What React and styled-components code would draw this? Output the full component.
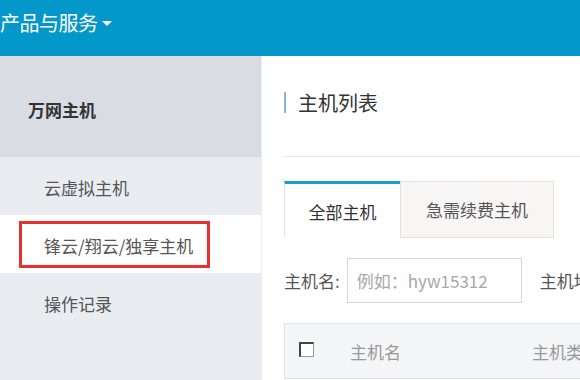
import styled, { createGlobalStyle } from "styled-components";

const GlobalStyled = createGlobalStyle`
* {
  margin: 0;
  padding: 0;
  box-sizing: border-box;
}
body {
  font-family: "Noto Sans CJK SC", "Liberation Sans", sans-serif;
  background: #ffffff;
  overflow: hidden;
}
`;

const Page = styled.div`
  display: flex;
  flex-direction: column;
  width: 580px;
  height: 380px;
  overflow: hidden;
`;

const TopBar = styled.div`
  display: flex;
  align-items: center;
  height: 56px;
  flex-shrink: 0;
  padding-bottom: 12px;
  background: #0397ca;
  color: #ffffff;
  font-size: 20px;
  letter-spacing: -0.5px;
`;

const Caret = styled.span`
  display: inline-block;
  margin-left: 4px;
  margin-top: 2px;
  border-left: 5px solid transparent;
  border-right: 5px solid transparent;
  border-top: 5px solid #ffffff;
`;

const Body = styled.div`
  display: flex;
  flex: 1;
  min-height: 0;
`;

const Sidebar = styled.aside`
  display: flex;
  flex-direction: column;
  width: 261px;
  flex-shrink: 0;
  background: #e9ecf1;
`;

const SideHeader = styled.div`
  display: flex;
  align-items: center;
  height: 101px;
  padding-left: 28px;
  padding-top: 6px;
  background: #d9dce3;
  color: #333333;
  font-size: 17px;
  font-weight: bold;
`;

const SideItem = styled.div`
  display: flex;
  align-items: center;
  height: 58px;
  padding: 0 19px;
  background: ${(p) => (p.$active ? "#ffffff" : "transparent")};
  color: #555555;
  font-size: 17px;
`;

const Highlight = styled.div`
  display: flex;
  align-items: center;
  width: 191px;
  height: 47px;
  padding-left: ${(p) => (p.$on ? "22px" : "25px")};
  padding-top: 2px;
  border: ${(p) => (p.$on ? "3px solid #e8302f" : "none")};
`;

const Main = styled.main`
  flex: 1;
  padding-left: 22px;
  border-left: 1px solid #eeeeee;
  overflow: hidden;
`;

const TitleRow = styled.div`
  display: flex;
  align-items: center;
  gap: 12px;
  height: 101px;
  padding-top: 34px;
  padding-bottom: 41px;
  border-bottom: 1px solid #e6e6e6;
`;

const TitleBar = styled.span`
  width: 2px;
  height: 21px;
  background: #8cb3dc;
`;

const Title = styled.h2`
  font-size: 20px;
  font-weight: normal;
  color: #333333;
  line-height: 26px;
`;

const TabBar = styled.div`
  display: flex;
  margin-top: 24px;
  width: 400px;
`;

const Tab = styled.div`
  display: flex;
  align-items: center;
  justify-content: center;
  height: 57px;
  width: ${(p) => p.$w}px;
  font-size: 17px;
  color: ${(p) => (p.$active ? "#333333" : "#555555")};
  background: ${(p) => (p.$active ? "#ffffff" : "#f7f6f5")};
  border: 1px solid #e2e2e2;
  border-top: ${(p) => (p.$active ? "3px solid #17a0c9" : "1px solid #e2e2e2")};
  border-right: ${(p) => (p.$active ? "none" : "1px solid #e2e2e2")};
  border-bottom: ${(p) => (p.$active ? "none" : "1px solid #e2e2e2")};
`;

const FilterRow = styled.div`
  display: flex;
  align-items: center;
  margin-top: 20px;
  white-space: nowrap;
`;

const Label = styled.span`
  font-size: 17px;
  color: #555555;
  margin-right: ${(p) => p.$gap || 0}px;
`;

const Input = styled.input`
  width: 175px;
  height: 45px;
  flex-shrink: 0;
  padding-left: 9px;
  margin-right: 18px;
  border: 1px solid #d6d6d6;
  font-family: "Noto Sans CJK SC", "Liberation Sans", sans-serif;
  font-size: 17px;
  color: #333333;
  outline: none;
  &::placeholder {
    color: #a8a8a8;
  }
`;

const TableHead = styled.div`
  display: flex;
  align-items: center;
  height: 56px;
  margin-top: 20px;
  padding-left: 14px;
  background: #f4f5f7;
  border: 1px solid #e4e4e4;
  border-right: none;
  white-space: nowrap;
`;

const Check = styled.span`
  width: 15px;
  height: 15px;
  flex-shrink: 0;
  margin-right: 36px;
  margin-bottom: 4px;
  background: #ffffff;
  border: 1px solid #999999;
  border-top: 2px solid #444444;
  border-left: 2px solid #444444;
`;

const HeadCell = styled.span`
  width: ${(p) => p.$w}px;
  flex-shrink: 0;
  font-size: 17px;
  color: #999999;
`;

const sideItems = ["云虚拟主机", "锋云/翔云/独享主机", "操作记录"];

export default function App() {
  return (
    <>
      <GlobalStyled />
      <Page>
        <TopBar>
          产品与服务
          <Caret />
        </TopBar>
        <Body>
          <Sidebar>
            <SideHeader>万网主机</SideHeader>
            {sideItems.map((item, i) => (
              <SideItem key={item} $active={i === 1}>
                <Highlight $on={i === 1}>{item}</Highlight>
              </SideItem>
            ))}
          </Sidebar>
          <Main>
            <TitleRow>
              <TitleBar />
              <Title>主机列表</Title>
            </TitleRow>
            <TabBar>
              <Tab $active $w={116}>全部主机</Tab>
              <Tab $w={154}>急需续费主机</Tab>
            </TabBar>
            <FilterRow>
              <Label $gap={7}>主机名:</Label>
              <Input placeholder="例如：hyw15312" />
              <Label>主机地址:</Label>
            </FilterRow>
            <TableHead>
              <Check />
              <HeadCell $w={182}>主机名</HeadCell>
              <HeadCell $w={120}>主机类型</HeadCell>
            </TableHead>
          </Main>
        </Body>
      </Page>
    </>
  );
}
